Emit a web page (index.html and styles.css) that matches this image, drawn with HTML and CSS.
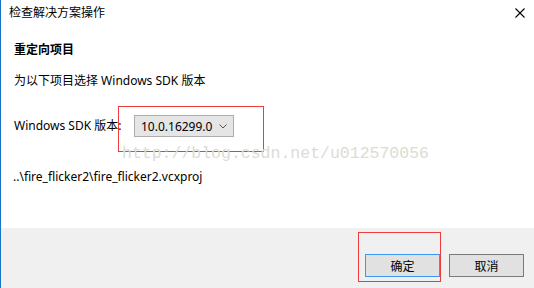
FILE: index.html
```html
<!DOCTYPE html>
<html lang="zh-CN">
<head>
  <meta charset="UTF-8" />
  <title>检查解决方案操作</title>
  <link rel="stylesheet" href="styles.css">
</head>
<body>

<div class="dialog">
  <div class="titlebar">
    <span class="title">检查解决方案操作</span>
    <svg class="close" width="10" height="10" viewBox="0 0 10 10">
      <path d="M0.5 0.5 L9.5 9.5 M9.5 0.5 L0.5 9.5" stroke="#000" stroke-width="1.1" fill="none"/>
    </svg>
  </div>

  <div class="content">
    <h1 class="heading">重定向项目</h1>
    <p class="desc">为以下项目选择 Windows SDK 版本</p>

    <div class="sdk-row">
      <label class="sdk-label">Windows SDK 版本:</label>
      <div class="select">
        <span>10.0.16299.0</span>
        <svg class="chevron" width="8" height="5" viewBox="0 0 8 5">
          <path d="M0.5 0.5 L4 4 L7.5 0.5" stroke="#555" stroke-width="1" fill="none"/>
        </svg>
      </div>
    </div>

    <p class="path">..\fire_flicker2\fire_flicker2.vcxproj</p>
  </div>

  <div class="footer">
    <button class="btn btn-primary">确定</button>
    <button class="btn">取消</button>
  </div>

  <!-- annotations drawn over the screenshot -->
  <div class="mark mark-sdk"></div>
  <div class="mark mark-ok"></div>
  <div class="watermark">http://blog.csdn.net/u012570056</div>
</div>

</body>
</html>
```

FILE: styles.css
```css
body {
  margin: 0;
  background: #fff;
  font-family: "Noto Sans", "Noto Sans CJK SC", sans-serif;
  font-size: 12px;
  color: #000;
}
.dialog {
  position: relative;
  width: 533px;
  height: 288px;
  border-left: 1px solid #1a73c4;
  display: flex;
  flex-direction: column;
  overflow: hidden;
}
.titlebar {
  height: 30px;
  padding: 5px 0 0 8px;
  box-sizing: border-box;
  display: flex;
  align-items: flex-start;
  justify-content: space-between;
}
.title {
  line-height: 16px;
}
.close {
  margin: 3px 9px 0 0;
}
.content {
  flex: 1;
  padding: 12px 13px 0;
}
.heading {
  margin: 0;
  font-size: 12px;
  font-weight: bold;
  line-height: 16px;
}
.desc {
  margin: 15px 0 0;
  line-height: 16px;
}
.sdk-row {
  margin-top: 26px;
  display: flex;
  align-items: center;
}
.sdk-label {
  width: 120px;
  line-height: 16px;
}
.select {
  width: 100px;
  height: 22px;
  box-sizing: border-box;
  border: 1px solid #adadad;
  background: #e5e5e5;
  display: flex;
  align-items: center;
  justify-content: space-between;
  padding: 0 6px 0 6px;
  font-size: 12px;
}
.chevron {
  margin-top: 1px;
}
.path {
  margin: 32px 0 0 -1px;
  line-height: 16px;
}
.footer {
  height: 60px;
  background: #f0f0f0;
  display: flex;
  justify-content: flex-end;
  align-items: flex-start;
  gap: 9px;
  padding: 26px 10px 0 0;
  box-sizing: border-box;
}
.btn {
  width: 75px;
  height: 23px;
  font-family: inherit;
  font-size: 12px;
  background: #e1e1e1;
  border: 1px solid #7a7a7a;
  padding: 0;
  color: #000;
}
.btn-primary {
  border-color: #3c97f3;
}
.mark {
  position: absolute;
  border: 1px solid #ee3b3b;
  box-sizing: border-box;
}
.mark-sdk {
  left: 117px;
  top: 106px;
  width: 146px;
  height: 46px;
}
.mark-ok {
  left: 357px;
  top: 232px;
  width: 83px;
  height: 50px;
}
.watermark {
  position: absolute;
  left: 121px;
  top: 144px;
  font-family: "Liberation Mono", monospace;
  font-size: 16.5px;
  line-height: 20px;
  color: #dcdcd4;
}
```
